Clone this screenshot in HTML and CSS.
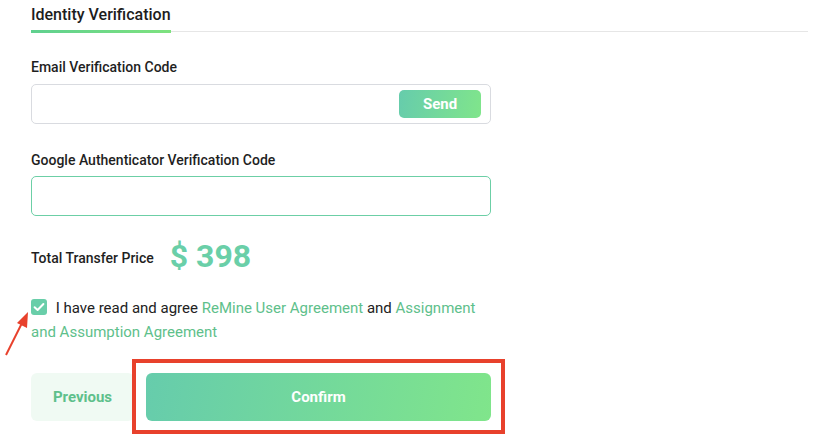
FILE: index.html
```html
<!DOCTYPE html>
<html>
<head>
<meta charset="utf-8">
<link rel="stylesheet" href="styles.css">
</head>
<body>
<div class="page">
  <div class="tabs">
    <div class="tab">Identity Verification</div>
  </div>

  <div class="field email-field">
    <div class="label">Email Verification Code</div>
    <div class="input">
      <button class="send">Send</button>
    </div>
  </div>

  <div class="field google-field">
    <div class="label">Google Authenticator Verification Code</div>
    <div class="input active"></div>
  </div>

  <div class="total">
    <span class="total-label">Total Transfer Price</span>
    <span class="total-value">$ 398</span>
  </div>

  <div class="agree">
    <span class="checkbox">
      <svg width="16" height="16" viewBox="0 0 16 16"><path d="M3.6 8.2 L6.6 11 L12.4 5" fill="none" stroke="#fff" stroke-width="2" stroke-linecap="round" stroke-linejoin="round"/></svg>
    </span>
    I have read and agree <span class="link">ReMine User Agreement</span> and <span class="link">Assignment and Assumption Agreement</span>
    <svg class="arrow" width="40" height="60" viewBox="0 0 40 60"><line x1="6" y1="57" x2="22" y2="25" stroke="#e8412c" stroke-width="2"/><polygon points="28,14 17,25 27,30" fill="#e8412c"/></svg>
  </div>

  <div class="actions">
    <button class="prev">Previous</button>
    <div class="highlight">
      <button class="confirm">Confirm</button>
    </div>
  </div>
</div>
</body>
</html>
```

FILE: styles.css
```css
* { box-sizing: border-box; }
html, body { margin: 0; padding: 0; background: #fff; }
body {
  font-family: Roboto, "Noto Sans", Arial, sans-serif;
  color: #1f1f1f;
}
.page {
  width: 840px;
  height: 442px;
  padding: 4px 0 0 31px;
  position: relative;
  overflow: hidden;
}
.tabs {
  width: 777px;
  border-bottom: 1px solid #e6e6e6;
  display: flex;
}
.tab {
  font-size: 16px;
  line-height: 22px;
  font-weight: 500;
  color: #1d1d1d;
  padding: 0 0 4px 0;
  width: 140px;
  margin-bottom: -2px;
  border-bottom: 3px solid transparent;
  border-image: linear-gradient(90deg, #5fd08f, #7ee27f) 1;
}
.field { width: 460px; }
.email-field { margin-top: 25px; }
.google-field { margin-top: 26px; }
.label {
  font-size: 14px;
  line-height: 20px;
  font-weight: 500;
  color: #1f1f1f;
  margin-bottom: 7px;
}
.google-field .label { margin-bottom: 6px; }
.input {
  height: 40px;
  border: 1px solid #d9dbe0;
  border-radius: 5px;
  display: flex;
  align-items: center;
  justify-content: flex-end;
  padding-right: 9px;
}
.input.active { border-color: #6ccfa6; }
.send {
  width: 82px;
  height: 28px;
  border: 0;
  border-radius: 5px;
  background: linear-gradient(100deg, #66ccac, #80e58b);
  color: #fff;
  font-family: inherit;
  font-size: 15px;
  font-weight: 700;
}
.total {
  display: flex;
  align-items: center;
  margin-top: 21px;
  height: 38px;
}
.total-label {
  font-size: 14px;
  font-weight: 500;
  color: #1f1f1f;
  margin-right: 16px;
  padding-top: 3px;
}
.total-value {
  font-size: 32px;
  font-weight: 700;
  color: #6acfa8;
}
.agree {
  position: relative;
  margin-top: 21px;
  width: 460px;
  font-size: 15px;
  line-height: 24px;
  color: #222;
}
.checkbox {
  display: inline-block;
  width: 16px;
  height: 16px;
  background: #69cea9;
  border-radius: 3px;
  vertical-align: -2px;
  margin-right: 5px;
}
.checkbox svg { display: block; }
.link { color: #5ec08b; }
.arrow {
  position: absolute;
  left: -31px;
  top: 2px;
}
.actions {
  display: flex;
  align-items: center;
  margin-top: 15px;
}
.prev {
  width: 103px;
  height: 48px;
  border: 0;
  border-radius: 6px;
  background: #f0faf3;
  color: #5ec08b;
  font-family: inherit;
  font-size: 15px;
  font-weight: 700;
}
.highlight {
  margin-left: -2px;
  border: 4px solid #e8412c;
  padding: 10px 10px 9px 10px;
  display: flex;
}
.confirm {
  width: 345px;
  height: 48px;
  border: 0;
  border-radius: 6px;
  background: linear-gradient(100deg, #66ccac, #80e58b);
  color: #fff;
  font-family: inherit;
  font-size: 15px;
  font-weight: 700;
}
```
